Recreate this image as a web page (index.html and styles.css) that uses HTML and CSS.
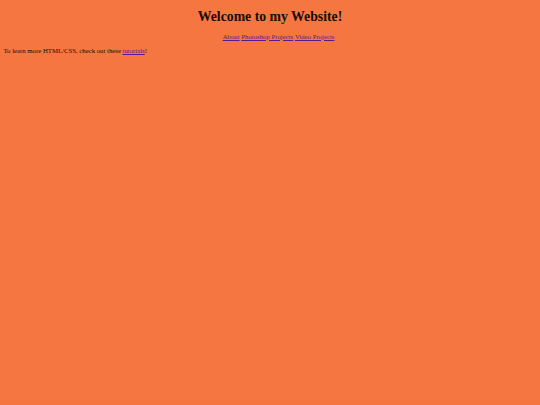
FILE: index.html
```html
<!DOCTYPE html>
<html>
<head>
<meta charset="utf-8">
<title>Welcome</title>
<link rel="stylesheet" href="styles.css">
</head>
<body class="page">
<h1 class="title">Welcome to my Website!</h1>
<ul class="nav">
<li class="nav-item"><a class="link" href="#">About</a></li>
<li class="nav-item"><a class="link" href="#">Photoshop Projects</a></li>
<li class="nav-item"><a class="link" href="#">Video Projects</a></li>
</ul>
<p class="intro">To learn more HTML/CSS, check out these <a class="link" href="#">tutorials</a>!</p>
</body>
</html>
```

FILE: styles.css
```css
html {
  background: #f67642;
}
.page {
  margin: 3.44px;
  font-family: "Liberation Serif", "Times New Roman", serif;
  font-size: 6.75px;
  color: #1a0a04;
}
.title {
  font-size: 13.76px;
  margin: 5.2px 0 8.2px;
  text-align: center;
}
.nav {
  list-style: none;
  text-align: center;
  padding-left: 17.2px;
  margin: 6.75px 0;
}
.nav-item {
  display: inline;
}
.link {
  color: #551a8b;
}
.intro {
  margin: 7.6px 0;
}
```
